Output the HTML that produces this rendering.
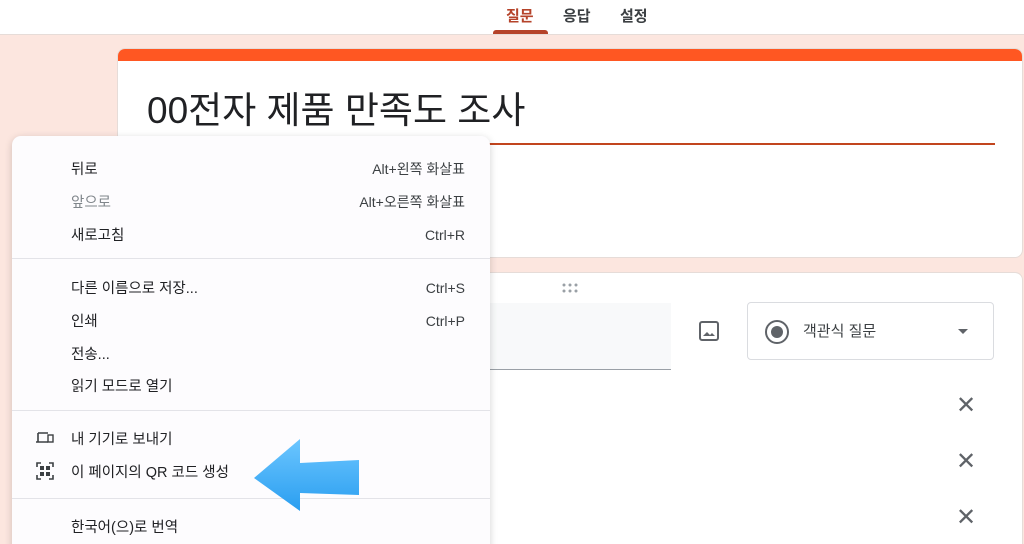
<!DOCTYPE html><html><head><meta charset="utf-8"><style>
*{margin:0;padding:0;box-sizing:border-box}
html,body{width:1024px;height:544px;overflow:hidden}
body{background:#fce6df;font-family:"Liberation Sans","Noto Sans CJK KR",sans-serif;position:relative}
.top{position:absolute;left:0;top:0;width:1024px;height:35px;background:#fff;border-bottom:1px solid #e6dcd8}
.tab{position:absolute;top:5px;font-size:15px;color:#3c4043;font-weight:bold}
.card{position:absolute;left:117px;width:906px;background:#fff;border-radius:8px;border:1px solid #e6dcd8}
.menu{position:absolute;left:12px;top:136px;width:478px;height:430px;background:#fdfcfe;border-radius:9px;box-shadow:0 2px 8px rgba(0,0,0,.18)}
.it{position:absolute;left:59px;font-size:14.5px;color:#202124;line-height:18px;margin-top:2px}
.sc{position:absolute;right:25px;font-size:14px;color:#3c4043;line-height:18px;margin-top:1px}
.sep{position:absolute;left:0;width:478px;height:1px;background:#e3e3e8}
.x{position:absolute;left:956px;font-size:24px;color:#5f6368;line-height:1}
</style></head><body>
<div class="top">
<span class="tab" style="left:506px;color:#b5432a">질문</span>
<span class="tab" style="left:563px">응답</span>
<span class="tab" style="left:620px">설정</span>
<div style="position:absolute;left:493px;top:30px;width:55px;height:4px;background:#b5432a;border-radius:3px 3px 0 0"></div>
</div>
<div class="card" style="top:48px;height:210px;overflow:hidden">
<div style="height:12px;background:#ff5722"></div>
<div style="position:absolute;left:29px;top:40px;font-size:37px;color:#202124;line-height:44px">00전자 제품 만족도 조사</div>
<div style="position:absolute;left:8px;top:94px;width:869px;height:2px;background:#c2451e"></div>
</div>
<div class="card" style="top:272px;height:290px">
<svg style="position:absolute;left:444px;top:10px" width="18" height="10"><g fill="#9aa0a6"><circle cx="2" cy="2" r="1.5"/><circle cx="8" cy="2" r="1.5"/><circle cx="14" cy="2" r="1.5"/><circle cx="2" cy="8" r="1.5"/><circle cx="8" cy="8" r="1.5"/><circle cx="14" cy="8" r="1.5"/></g></svg>
<div style="position:absolute;left:0;top:30px;width:553px;height:67px;background:#f8f9fa;border-bottom:1px solid #9aa0a6"></div>
<svg style="position:absolute;left:580px;top:47px" width="22" height="22" viewBox="0 0 22 22"><rect x="2" y="2" width="18" height="18" rx="2" fill="none" stroke="#5f6368" stroke-width="2"/><path d="M5 16l4-4 3 3 2-2 3 3z" fill="#5f6368"/></svg>
<div style="position:absolute;left:629px;top:29px;width:247px;height:58px;border:1px solid #dadce0;border-radius:4px">
<svg style="position:absolute;left:16px;top:16px" width="26" height="26"><circle cx="13" cy="13" r="11" fill="none" stroke="#5f6368" stroke-width="2"/><circle cx="13" cy="13" r="6" fill="#5f6368"/></svg>
<span style="position:absolute;left:55px;top:17px;font-size:15px;color:#3c4043">객관식 질문</span>
<div style="position:absolute;left:210px;top:26px;border:5px solid transparent;border-top-color:#5f6368"></div>
</div>
</div>
<div class="x" style="top:394px">✕</div>
<div class="x" style="top:450px">✕</div>
<div class="x" style="top:506px">✕</div>
<div class="menu">
<div class="it" style="top:23px">뒤로</div><div class="sc" style="top:23px">Alt+왼쪽 화살표</div>
<div class="it" style="top:56px;color:#80868b">앞으로</div><div class="sc" style="top:56px">Alt+오른쪽 화살표</div>
<div class="it" style="top:89px">새로고침</div><div class="sc" style="top:89px">Ctrl+R</div>
<div class="sep" style="top:122px"></div>
<div class="it" style="top:142px">다른 이름으로 저장...</div><div class="sc" style="top:142px">Ctrl+S</div>
<div class="it" style="top:175px">인쇄</div><div class="sc" style="top:175px">Ctrl+P</div>
<div class="it" style="top:208px">전송...</div>
<div class="it" style="top:240px">읽기 모드로 열기</div>
<div class="sep" style="top:274px"></div>
<svg style="position:absolute;left:24px;top:296px" width="18" height="12"><path d="M2 1h10M2 1v9M0 10h12" stroke="#3c4043" stroke-width="1.6" fill="none"/><rect x="12" y="3" width="5" height="7" stroke="#3c4043" stroke-width="1.4" fill="none"/></svg>
<div class="it" style="top:293px">내 기기로 보내기</div>
<svg style="position:absolute;left:24px;top:326px" width="18" height="18"><path d="M1 5V1h4M13 1h4v4M17 13v4h-4M5 17H1v-4" stroke="#3c4043" stroke-width="1.6" fill="none"/><rect x="4" y="4" width="4" height="4" fill="#3c4043"/><rect x="10" y="4" width="4" height="4" fill="#3c4043"/><rect x="4" y="10" width="4" height="4" fill="#3c4043"/><rect x="10" y="10" width="4" height="4" fill="#3c4043"/></svg>
<div class="it" style="top:326px">이 페이지의 QR 코드 생성</div>
<div class="sep" style="top:362px"></div>
<div class="it" style="top:381px">한국어(으)로 번역</div>
</div>
<svg style="position:absolute;left:250px;top:436px" width="115" height="76" viewBox="0 0 115 76"><defs><linearGradient id="g" x1="0" y1="0" x2="0" y2="1"><stop offset="0" stop-color="#6cc6ff"/><stop offset="1" stop-color="#2a9ef0"/></linearGradient></defs><path d="M4 42L50 3V27L109 24V59L50 57V75Z" fill="url(#g)"/></svg>
</body></html>
